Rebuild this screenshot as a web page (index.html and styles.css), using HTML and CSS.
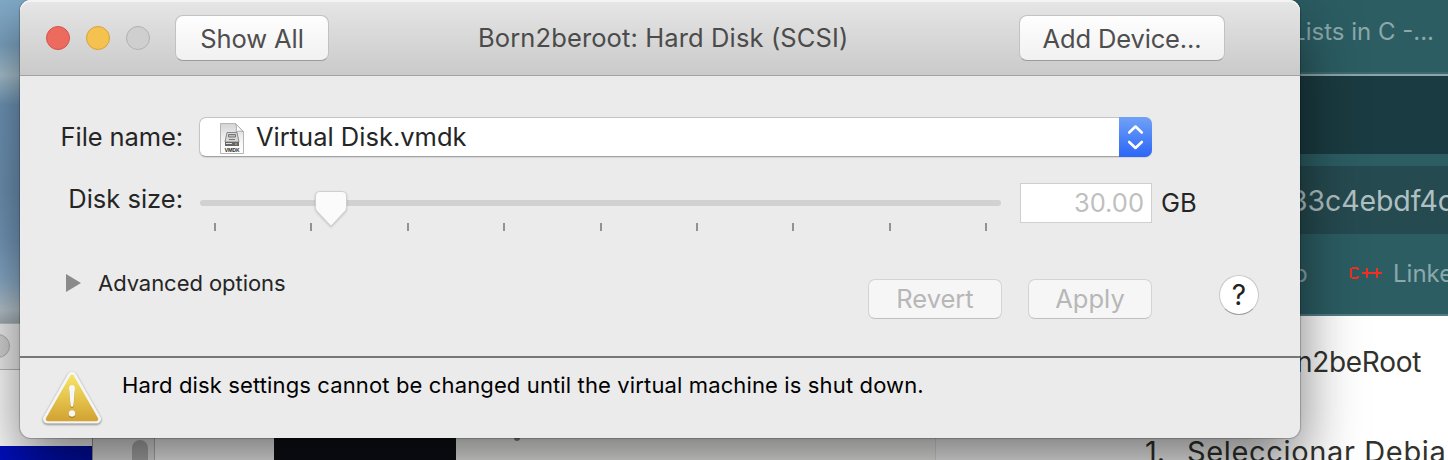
FILE: index.html
```html
<!DOCTYPE html>
<html lang="en">
<head>
<meta charset="utf-8">
<title>Born2beroot: Hard Disk (SCSI)</title>
<link rel="stylesheet" href="styles.css">
</head>
<body>
<div class="desktop">
  <div class="finder">
    <div class="finder-bar"><span class="finder-light"></span></div>
    <div class="finder-body"></div>
  </div>
  <div class="console">
    <div class="console-blue"></div>
    <div class="console-scroll"><span class="scroll-thumb"></span></div>
    <div class="console-pane"></div>
    <div class="console-black"></div>
  </div>
  <div class="browser">
    <div class="sheet-left"><span class="speck"></span></div>
    <div class="sheet">
      <div class="tabs"><span>Lists in C -...</span></div>
      <div class="toolbar"></div>
      <div class="address"><span>33c4ebdf4c</span></div>
      <div class="bookmarks">
        <span class="bm-first">b</span>
        <svg class="cpp" width="34" height="14" viewBox="0 0 34 14" fill="none" stroke="#ee3124" stroke-width="2" shape-rendering="crispEdges"><path d="M9 4V2M9 2H3M2 2V12M3 12H9M9 12V10M13 7H33M18 2V12M28 2V12"/></svg>
        <span class="bm-link">Linke</span>
      </div>
      <div class="page">
        <p class="page-title">n2beRoot</p>
        <p class="page-step"><span class="step-number">1.</span><span class="step-text">Seleccionar Debia</span></p>
      </div>
    </div>
  </div>

  <main class="dialog">
    <header class="titlebar">
      <div class="lights"><i class="light red"></i><i class="light yellow"></i><i class="light off"></i></div>
      <button class="btn-top show-all"><span>Show All</span></button>
      <h1 class="title"><span>Born2beroot: Hard Disk (SCSI)</span></h1>
      <button class="btn-top add-device"><span>Add Device...</span></button>
    </header>
    <section class="form">
      <div class="row">
        <label class="label file-label">File name:</label>
        <div class="select">
          <svg class="vmdk" width="26" height="33" viewBox="0 0 26 33">
            <defs><linearGradient id="paper" x1="0" y1="0" x2="0" y2="1"><stop offset="0" stop-color="#d4d4d4"/><stop offset=".6" stop-color="#f6f6f6"/><stop offset="1" stop-color="#fff"/></linearGradient></defs>
            <path d="M1.5 1.5H16.5L24.5 10V31.5H1.5Z" fill="url(#paper)" stroke="#b5b5b5"/>
            <path d="M16.5 1.5C18 5 17.500 8 17 10C20 8.500 22.500 9 24.500 10Z" fill="#fff" stroke="#aaa"/>
            <path d="M8 10.500H18L20 20H6Z" fill="#d8d8d8" stroke="#888"/>
            <path d="M9.500 12.500H16.500V15H9.500ZM10 17.500H16" fill="#bbb" stroke="#777"/>
            <path d="M6 20H20V24H6Z" fill="#666"/>
            <path d="M7 21.500H13" stroke="#ddd"/><path d="M16 22H18" stroke="#ddc34c"/>
            <text x="13" y="30.300" text-anchor="middle" textLength="15" class="vmdk-text">VMDK</text>
          </svg>
          <span class="select-text">Virtual Disk.vmdk</span>
          <span class="stepper"><svg width="33" height="40" viewBox="0 0 33 40" fill="none" stroke="#fff" stroke-width="2.600" stroke-linecap="round" stroke-linejoin="round"><path d="M10.200 15.500L16.500 9.500L22.800 15.500M10.200 25L16.500 31L22.800 25"/></svg></span>
        </div>
      </div>
      <div class="row size-row">
        <label class="label size-label">Disk size:</label>
        <svg class="slider" width="801" height="56" viewBox="0 0 801 56">
          <rect y="17" width="801" height="6" rx="3" fill="#d1d1d1"/>
          <path d="M15 40V48M111 40V48M208 40V48M304 40V48M401 40V48M497 40V48M593 40V48M690 40V48M786 40V48" stroke="#929292" stroke-width="2"/>
          <path class="thumb" d="M120 8.500H142Q146.500 8.500 146.500 13V24.500Q146.500 26.500 145 28.200L131 43L117 28.200Q115.500 26.500 115.500 24.500V13Q115.500 8.500 120 8.500Z" fill="#fbfbfb" stroke="#cfcfcf"/>
        </svg>
        <div class="size-field"><span>30.00</span></div>
        <span class="unit">GB</span>
      </div>
      <div class="row actions">
        <div class="advanced">
          <svg width="16" height="20" viewBox="0 0 16 20"><path d="M1 1V19L16 10Z" fill="#8a8a8a"/></svg>
          <span>Advanced options</span>
        </div>
        <button class="btn revert" disabled><span>Revert</span></button>
        <button class="btn apply" disabled><span>Apply</span></button>
        <button class="help">?</button>
      </div>
    </section>
    <footer class="notice">
      <svg class="warn" width="64" height="60" viewBox="0 0 64 60">
        <defs><linearGradient id="gold" x1="0" y1="0" x2="0" y2="1"><stop offset="0" stop-color="#f5e264"/><stop offset=".5" stop-color="#e5c44b"/><stop offset="1" stop-color="#d3a535"/></linearGradient></defs>
        <path class="warn-frame" d="M32 7L56.500 50H7.500Z" fill="#f5f5f5" stroke="#f5f5f5" stroke-width="9" stroke-linejoin="round"/>
        <path d="M32 8L56 50H8Z" fill="url(#gold)" stroke="url(#gold)" stroke-width="4.500" stroke-linejoin="round"/>
        <path class="mark" d="M29 19.500Q29 16 32 16Q35 16 35 19.500L33.500 36Q33.200 38 32 38Q30.800 38 30.500 36Z" fill="#f7f7f7"/>
        <circle class="mark" cx="32" cy="44.500" r="3.200" fill="#f7f7f7"/>
      </svg>
      <p>Hard disk settings cannot be changed until the virtual machine is shut down.</p>
    </footer>
  </main>
</div>
</body>
</html>
```
FILE: styles.css
```css
* { box-sizing: border-box; }
body, p, h1 { margin: 0; }
body, button { font-family: Inter, "Liberation Sans", sans-serif; }
.desktop {
  position: relative;
  width: 1448px;
  height: 460px;
  overflow: hidden;
  background: linear-gradient(180deg, #82acc9 0, #7ba2c0 45px, #a9c3d1 75px, #7098bb 105px, #6f94b6 190px, #769bbd 240px, #8aadcb 280px, #b8c6cd 310px, #a0afb6 323px);
}

/* windows behind the dialog */
.finder { position: absolute; left: 0; top: 323px; width: 92px; height: 123px; background: #fff; }
.finder-bar { height: 47px; border-top: 1px solid #c0c0c0; border-bottom: 1px solid #b8b8b8; background: #f0f0f0; padding-top: 10px; overflow: hidden; }
.finder-light { display: block; width: 24px; height: 24px; margin-left: -14px; border: 1px solid #b0b0b0; border-radius: 50%; background: #d6d6d6; }
.console { position: absolute; left: 0; top: 430px; width: 456px; height: 30px; display: flex; }
.console-blue { width: 92px; margin-top: 16px; background: linear-gradient(90deg, #000fc0, #000da8); }
.console-scroll { width: 63px; background: #ebebeb; border-right: 1px solid #bbb; border-left: 1px solid #999; padding: 10px 0 0 39px; }
.scroll-thumb { display: block; width: 16px; height: 30px; border-radius: 8px; background: #b4b4b4; }
.console-pane { width: 119px; background: #fcfcfc; }
.console-black { width: 182px; background: #0e1016; }
.browser { position: absolute; left: 456px; top: 0; width: 992px; height: 460px; display: flex; background: #fff; }
.sheet-left { width: 480px; flex: none; background: #fbfbf9; border-right: 1px solid #e8e8e8; padding: 436px 0 0 58px; }
.speck { display: block; width: 6px; height: 5px; border-radius: 0 0 3px 3px; background: #888; }
.sheet { flex: 1; min-width: 0; display: flex; flex-direction: column; white-space: nowrap; }
.sheet > div { flex: none; }
.tabs { height: 76px; background: #2b5d63; border-bottom: 2px solid #8ba6a8; box-shadow: inset 0 -2px #3a6a70; padding: 17px 14px 0 0; text-align: right; color: #8ca8ab; font-size: 24px; line-height: 30px; }
.toolbar { height: 78px; background: #1a3b41; }
.address { height: 80px; border-top: 12px solid #2b5d63; background: #254a50; color: #b0c0c2; font-size: 28.500px; line-height: 69px; padding-left: 354px; letter-spacing: -0.100px; }
.bookmarks { height: 82px; background: #2b5d63; border-bottom: 2px solid #517d82; display: flex; padding-left: 357px; color: #8ca8ab; font-size: 24px; line-height: 80px; }
.bm-first { width: 56px; flex: none; }
.cpp { margin-top: 32px; flex: none; }
.bm-link { margin-left: 10px; }
.page { height: 144px; color: #32322d; font-size: 28px; line-height: 40px; padding-top: 26px; }
.page-title { text-align: right; padding-right: 27px; letter-spacing: -0.300px; }
.page-step { display: flex; margin-top: 50px; padding-left: 209px; font-size: 29px; }
.step-number { width: 42px; }
.step-text { letter-spacing: 0.650px; }

/* dialog */
.dialog { position: absolute; left: 20px; top: 0; width: 1280px; height: 438px; display: flex; flex-direction: column; border-radius: 11px; background: #ebebeb; box-shadow: 0 0 1px 1px rgba(0,0,0,.22), 0 28px 60px rgba(0,0,0,.53); }
.titlebar { height: 76px; flex: none; display: flex; padding: 15px 75px 0 26px; border-radius: 11px 11px 0 0; border-bottom: 1px solid #a2a2a2; background: linear-gradient(#e6e6e6, #cacaca); box-shadow: inset 0 2px #f4f4f4; }
.lights { display: flex; gap: 16px; padding-top: 11px; width: 129px; }
.light { width: 24px; height: 24px; border-radius: 50%; border: 1px solid; }
.red { background: #ed6a5f; border-color: #d3554c; }
.yellow { background: #f5c250; border-color: #d8a03d; }
.off { background: #cfcfcf; border-color: #b1b1b1; }
.btn-top { height: 46px; padding: 0; border: 1px solid #c2c2c2; border-bottom-color: #9b9b9b; border-radius: 8px; background: linear-gradient(#fefefe, #f1f1f1); color: #4e4e4e; font-size: 25.500px; line-height: 46px; white-space: nowrap; }
.show-all { width: 154px; letter-spacing: -0.100px; }
.title { flex: 1; padding-left: 149px; color: #4b4b4b; font-size: 25.500px; font-weight: 400; line-height: 46px; white-space: nowrap; letter-spacing: 0.120px; }
.add-device { width: 206px; letter-spacing: -0.150px; }
.form { height: 280px; flex: none; padding-top: 41px; color: #252525; }
.row { display: flex; }
.label { width: 163px; text-align: right; font-size: 25.500px; line-height: 40px; white-space: nowrap; letter-spacing: -0.100px; }
.select { width: 953px; height: 40px; display: flex; margin-left: 16px; border: 1px solid #c4c4c4; border-bottom-color: #a2a2a2; border-radius: 7px; background: #fff; box-shadow: 0 1px 1px #d5d5d5; }
.vmdk { margin: 4px 0 0 19px; }
.vmdk-text { font: bold 5px Inter, sans-serif; fill: #333; }
.select-text { flex: 1; padding-left: 11px; font-size: 25.500px; line-height: 38px; }
.stepper { width: 33px; height: 40px; margin: -1px -1px -1px 0; border-radius: 0 7px 7px 0; background: linear-gradient(#70a2f6, #2b66f7); }
.size-row { height: 82px; padding-top: 26px; }
.size-label { line-height: 32px; letter-spacing: 0; }
.slider { margin-left: 17px; flex: none; }
.thumb { filter: drop-shadow(0 1px 1px rgba(0,0,0,.18)); }
.size-field { width: 132px; height: 40px; margin-left: 19px; padding-right: 7px; border: 1px solid #cfcfcf; background: #fff; color: #bfbfbf; font-size: 25.500px; line-height: 38px; text-align: right; }
.unit { margin-left: 9px; font-size: 25.500px; line-height: 40px; }
.actions { padding-top: 40px; }
.advanced { width: 848px; display: flex; padding-left: 45px; font-size: 22px; line-height: 30px; margin-top: -11px; }
.advanced svg { margin-top: 5px; }
.advanced span { margin-left: 17px; letter-spacing: -0.050px; }
.btn { height: 40px; padding: 0; border: 1px solid #d3d3d3; border-bottom-color: #c0c0c0; border-radius: 7px; background: #f6f6f6; color: #b7b7b7; font-size: 25.500px; line-height: 38px; }
.revert { width: 134px; }
.apply { width: 124px; margin-left: 26px; }
.help { width: 40px; height: 40px; margin: -4px 0 0 67px; padding: 0; border: 1px solid #c8c8c8; border-bottom-color: #9d9d9d; border-radius: 50%; background: #fff; color: #222; font-size: 28px; line-height: 39px; }
.notice { height: 82px; flex: none; display: flex; border-top: 2px solid #777; padding: 10px 0 0 20px; color: #000; }
.warn { flex: none; margin-top: 1px; }
.warn-frame { filter: drop-shadow(0 1px 1px rgba(0,0,0,.5)); }
.mark { filter: drop-shadow(0 1px .5px rgba(110,80,10,.6)); }
.notice p { margin-left: 18px; font-size: 22px; line-height: 34px; white-space: nowrap; letter-spacing: 0.130px; }
```
